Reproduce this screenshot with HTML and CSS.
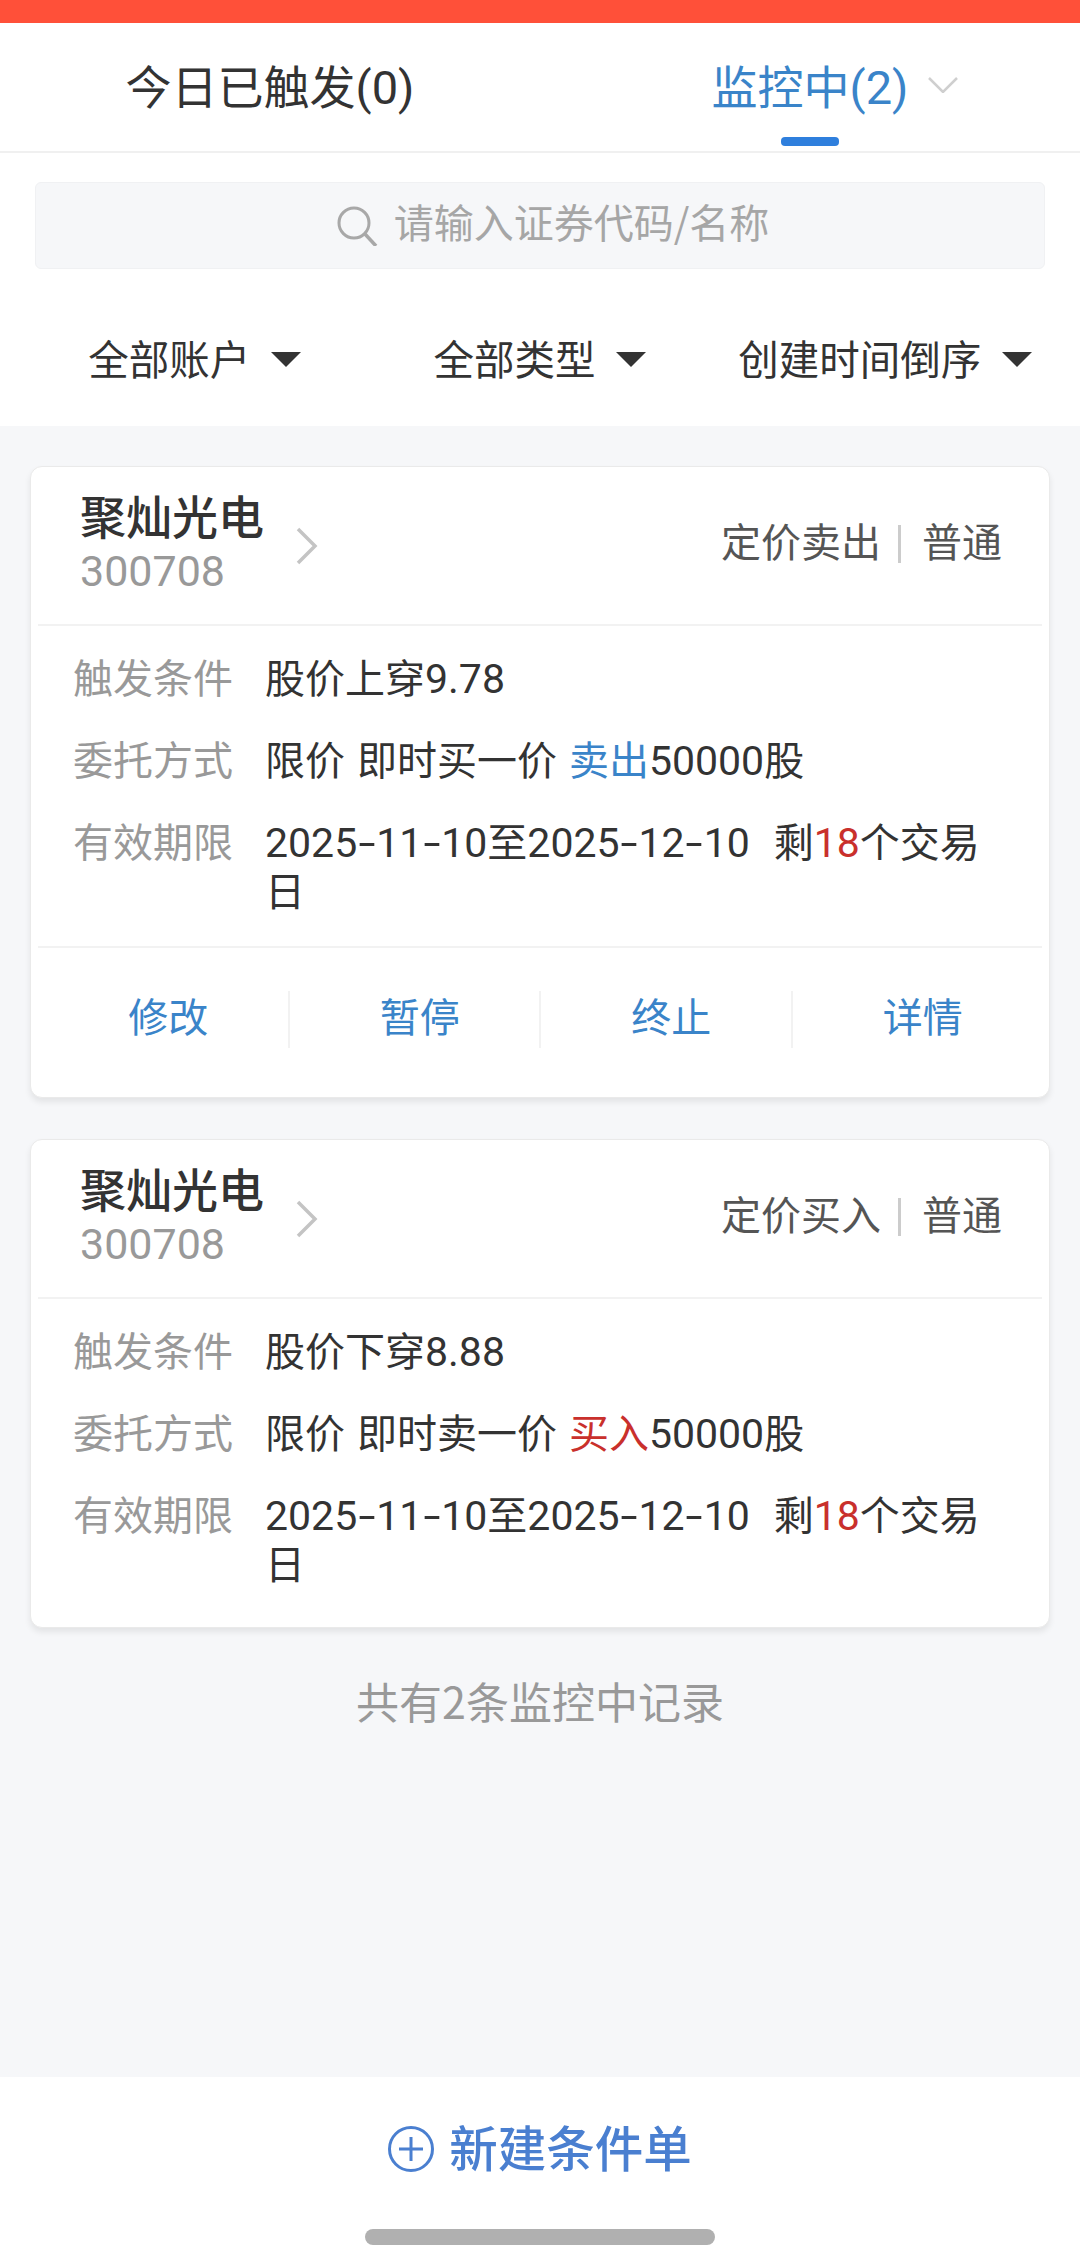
FILE: index.html
```html
<!DOCTYPE html>
<html lang="zh-CN">
<head>
    <meta charset="UTF-8">
    <title>条件单</title>
    <link rel="stylesheet" href="styles.css">
</head>
<body>
    <div class="status-strip"></div>
    <div class="tabs">
        <div class="tab"><span class="tab-label">今日已触发<span class="tab-num">(0)</span></span></div>
        <div class="tab tab-active">
            <span class="tab-label">监控中<span class="tab-num">(2)</span>
                <svg class="tab-chevron" width="30" height="16" viewBox="0 0 30 16"><path d="M1 1 L15 15 L29 1" fill="none" stroke="#cfcfcf" stroke-width="2.5"/></svg>
            </span>
            <span class="tab-bar"></span>
        </div>
    </div>
    <div class="search-wrap">
        <div class="search">
            <svg width="41" height="40" viewBox="0 0 41 40"><circle cx="17" cy="17" r="15" fill="none" stroke="#a8a8a8" stroke-width="3"/><path d="M28 28 L39 40" stroke="#a8a8a8" stroke-width="3.5" fill="none"/></svg>
            <span class="search-text">请输入证券代码/名称</span>
        </div>
    </div>
    <div class="filters">
        <div class="filter">全部账户<i class="caret"></i></div>
        <div class="filter">全部类型<i class="caret"></i></div>
        <div class="filter">创建时间倒序<i class="caret"></i></div>
    </div>

    <div class="main">
        <div class="card">
            <div class="card-head">
                <div class="stock">
                    <div class="stock-name">聚灿光电</div>
                    <div class="stock-code">300708</div>
                </div>
                <svg class="stock-arrow" width="24" height="38" viewBox="0 0 24 38"><path d="M3 2 L20 19 L3 36" fill="none" stroke="#c4c4c4" stroke-width="3.5"/></svg>
                <div class="order-type"><span>定价卖出</span><i class="order-sep"></i><span>普通</span></div>
            </div>
            <div class="card-body">
                <div class="row">
                    <div class="row-label">触发条件</div>
                    <div class="row-value">股价上穿<span class="num">9.78</span></div>
                </div>
                <div class="row">
                    <div class="row-label">委托方式</div>
                    <div class="row-value">限价 即时买一价 <span class="blue">卖出</span><span class="num">50000</span>股</div>
                </div>
                <div class="row">
                    <div class="row-label">有效期限</div>
                    <div class="row-value"><span class="num">2025<i class="dash">-</i>11<i class="dash">-</i>10</span>至<span class="num">2025<i class="dash">-</i>12<i class="dash">-</i>10</span>&nbsp;&nbsp;剩<span class="num red">18</span>个交易<span>日</span></div>
                </div>
            </div>
            <div class="card-actions">
                <div class="action">修改</div>
                <div class="action">暂停</div>
                <div class="action">终止</div>
                <div class="action">详情</div>
            </div>
        </div>

        <div class="card card-plain">
            <div class="card-head">
                <div class="stock">
                    <div class="stock-name">聚灿光电</div>
                    <div class="stock-code">300708</div>
                </div>
                <svg class="stock-arrow" width="24" height="38" viewBox="0 0 24 38"><path d="M3 2 L20 19 L3 36" fill="none" stroke="#c4c4c4" stroke-width="3.5"/></svg>
                <div class="order-type"><span>定价买入</span><i class="order-sep"></i><span>普通</span></div>
            </div>
            <div class="card-body">
                <div class="row">
                    <div class="row-label">触发条件</div>
                    <div class="row-value">股价下穿<span class="num">8.88</span></div>
                </div>
                <div class="row">
                    <div class="row-label">委托方式</div>
                    <div class="row-value">限价 即时卖一价 <span class="red">买入</span><span class="num">50000</span>股</div>
                </div>
                <div class="row">
                    <div class="row-label">有效期限</div>
                    <div class="row-value"><span class="num">2025<i class="dash">-</i>11<i class="dash">-</i>10</span>至<span class="num">2025<i class="dash">-</i>12<i class="dash">-</i>10</span>&nbsp;&nbsp;剩<span class="num red">18</span>个交易<span>日</span></div>
                </div>
            </div>
        </div>

        <div class="list-note">共有2条监控中记录</div>
    </div>

    <div class="bottom">
        <div class="new-order">
            <svg class="new-icon" width="46" height="48" viewBox="0 0 46 48"><circle cx="23" cy="24" r="21.5" fill="none" stroke="#4a7fd0" stroke-width="3"/><path d="M11 24 H35 M23 12 V36" stroke="#4a7fd0" stroke-width="3" fill="none"/></svg>
            <span>新建条件单</span>
        </div>
        <div class="home-bar"></div>
    </div>
</body>
</html>
```

FILE: styles.css
```css
html, body {
    margin: 0;
    height: 100%;
}
body {
    width: 1080px;
    height: 2264px;
    display: flex;
    flex-direction: column;
    background-color: #fff;
    color: #333;
    font-family: "Noto Sans CJK SC", "Noto Sans", sans-serif;
    font-size: 40px;
    overflow: hidden;
}
.status-strip {
    height: 23px;
    background-color: #ff5039;
}

/* tabs */
.tabs {
    display: flex;
    height: 130px;
    box-sizing: border-box;
    border-bottom: 2px solid #f0f0f0;
}
.tab {
    flex: 1;
    position: relative;
    text-align: center;
    padding-top: 27px;
    font-size: 46px;
    line-height: 68px;
}
.tab-label {
    position: relative;
}
.tab-num {
    font-family: Roboto, sans-serif;
    font-size: 47px;
}
.tab-active {
    color: #3a84c9;
}
.tab-chevron {
    position: absolute;
    left: 100%;
    top: 26px;
    margin-left: 20px;
}
.tab-bar {
    position: absolute;
    left: 241px;
    bottom: 5px;
    width: 58px;
    height: 9px;
    border-radius: 4px;
    background-color: #2f7fdd;
}

/* search + filters */
.search-wrap {
    padding: 29px 35px 0;
}
.search {
    height: 87px;
    box-sizing: border-box;
    padding-left: 26px;
    display: flex;
    align-items: center;
    justify-content: center;
    gap: 16px;
    background-color: #f6f7f9;
    border: 1px solid #f0f1f3;
    border-radius: 6px;
    color: #a6a6a6;
}
.search-text {
    padding-bottom: 10px;
}
.filters {
    display: flex;
    height: 157px;
    box-sizing: border-box;
    padding: 20px 22px 0;
    align-items: center;
    font-size: 40.5px;
}
.filter {
    flex: 1;
    display: flex;
    align-items: center;
    justify-content: center;
    gap: 21px;
    white-space: nowrap;
}
.caret {
    width: 0;
    height: 0;
    margin-top: 3px;
    border-left: 15px solid transparent;
    border-right: 15px solid transparent;
    border-top: 15px solid #333;
}

/* list */
.main {
    flex: 1;
    background-color: #f6f7f9;
    padding: 40px 30px 0;
}
.card {
    background-color: #fff;
    border: 1px solid #eaeaea;
    border-radius: 12px;
    box-shadow: 0 4px 6px rgba(0, 0, 0, 0.08);
    margin-bottom: 41px;
}
.card-plain {
    padding-bottom: 8px;
    margin-bottom: 43px;
}
.card-head {
    display: flex;
    align-items: center;
    height: 157px;
    margin: 0 7px;
    padding: 0 40px 0 42px;
    border-bottom: 2px solid #f2f2f2;
}
.stock {
    width: 215px;
    padding-bottom: 7px;
}
.stock-name {
    font-size: 46px;
    font-weight: 500;
    line-height: 54px;
    white-space: nowrap;
}
.stock-code {
    margin-top: 4px;
    font-family: Roboto, sans-serif;
    font-size: 43px;
    line-height: 52px;
    color: #999;
}
.order-type {
    margin-left: auto;
    padding-bottom: 4px;
    display: flex;
    align-items: center;
    color: #555;
}
.order-type span {
    padding-bottom: 8px;
}
.order-sep {
    width: 3px;
    height: 38px;
    margin: 0 21px 0 17px;
    background-color: #ccc;
}
.card-body {
    padding: 26px 40px 32px 42px;
}
.row {
    display: flex;
    line-height: 49px;
    margin-bottom: 33px;
}
.row:last-child {
    margin-bottom: 0;
}
.row-label {
    width: 192px;
    flex-shrink: 0;
    color: #999;
}
.row-value {
    flex: 1;
    white-space: pre-wrap;
    word-spacing: 3px;
}
.num {
    font-family: Roboto, sans-serif;
    font-size: 41px;
    line-height: 1;
}
.dash {
    display: inline-block;
    width: 12px;
    margin: 0 3.5px;
    text-align: center;
    font-style: normal;
    transform: scaleX(1.5);
}
.blue {
    color: #3a84c9;
}
.red {
    color: #c9302c;
}
.card-actions {
    display: flex;
    margin: 0 7px;
    padding: 43px 0 49px;
    border-top: 2px solid #f2f2f2;
}
.action {
    flex: 1;
    height: 57px;
    box-sizing: border-box;
    padding-left: 11px;
    line-height: 49px;
    text-align: center;
    color: #3a84c9;
    border-right: 2px solid #f2f2f2;
}
.action:last-child {
    border-right: none;
}
.list-note {
    text-align: center;
    color: #999;
    font-size: 43px;
    line-height: 58px;
}

/* bottom bar */
.bottom {
    height: 187px;
    display: flex;
    flex-direction: column;
    align-items: center;
    background-color: #fff;
}
.new-order {
    display: flex;
    align-items: center;
    gap: 15px;
    height: 48px;
    margin-top: 45px;
    color: #4a7fd0;
    font-size: 48.5px;
    font-weight: 500;
}
.new-icon {
    margin-top: 6px;
}
.home-bar {
    width: 350px;
    height: 16px;
    margin-top: 59px;
    border-radius: 8px;
    background-color: #b0b0b0;
}
```
